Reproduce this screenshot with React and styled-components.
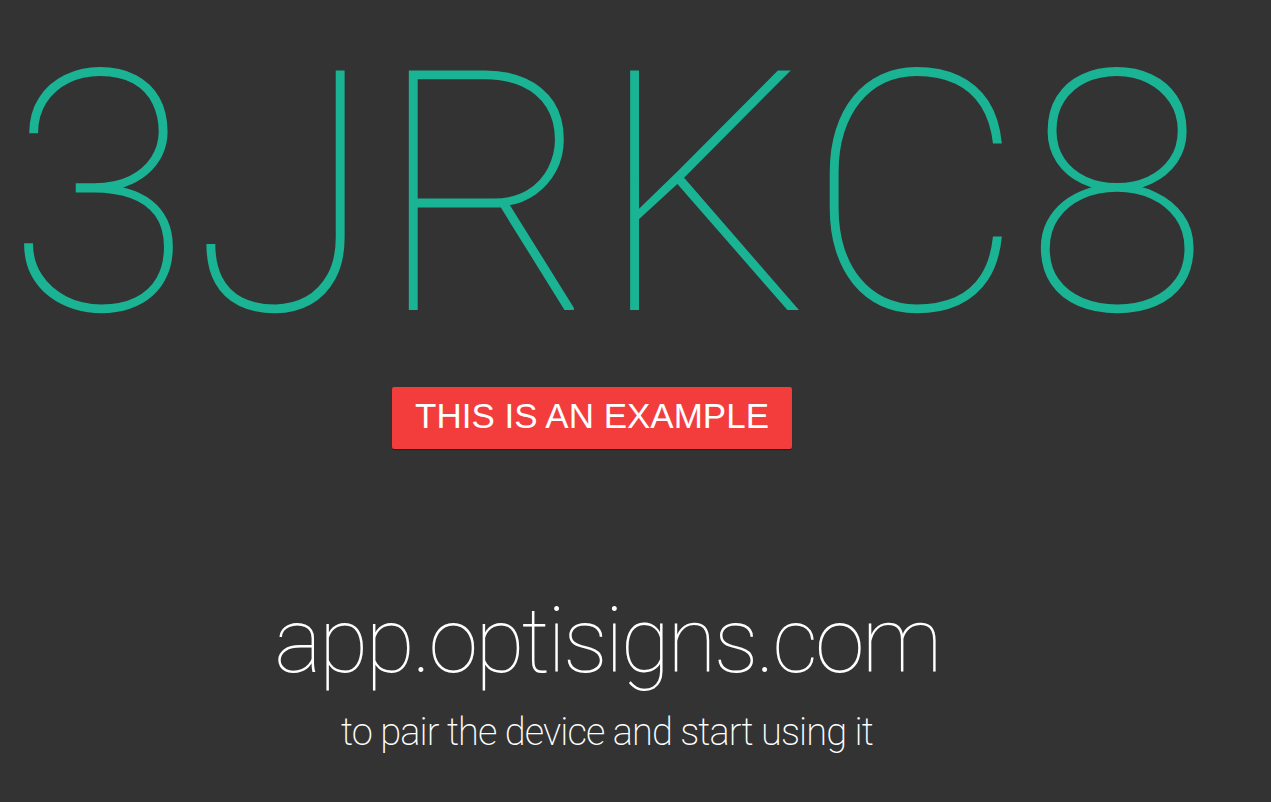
import React from "react";
import styled, { createGlobalStyle } from "styled-components";

const Global = createGlobalStyle`
  html, body { margin: 0; padding: 0; background: #333333; }
  body { font-family: Roboto, "Noto Sans", sans-serif; overflow: hidden; }
`;

const Page = styled.div`
  width: 1214px;
  height: 802px;
  display: flex;
  flex-direction: column;
  align-items: center;
  text-align: center;
`;

const Code = styled.div`
  align-self: stretch;
  padding-left: 2px;
  font-family: Roboto, sans-serif;
  font-weight: 100;
  font-size: 337px;
  line-height: 380px;
  color: #1ab394;
  margin-top: 5px;
  white-space: nowrap;
`;

const Badge = styled.div`
  box-sizing: border-box;
  margin-top: 2px;
  margin-right: 30px;
  background: #f33c3c;
  color: #fff;
  font-family: "Liberation Sans", Arial, sans-serif;
  font-size: 35px;
  line-height: 58px;
  height: 62px;
  padding: 0 23px 4px;
  border-radius: 2px;
  box-shadow: 0 1px 1px rgba(0, 0, 0, 0.45);
`;

const Url = styled.div`
  margin-top: 148px;
  font-family: Roboto, sans-serif;
  font-weight: 100;
  font-size: 90px;
  line-height: 90px;
  letter-spacing: -2.8px;
  color: #ffffff;
  white-space: nowrap;
`;

const Hint = styled.div`
  margin-top: 23px;
  font-family: Roboto, sans-serif;
  font-weight: 200;
  font-size: 38px;
  line-height: 44px;
  letter-spacing: -0.9px;
  color: #ffffff;
  white-space: nowrap;
`;

export default function App() {
  return (
    <>
      <Global />
      <Page>
        <Code>3JRKC8</Code>
        <Badge>THIS IS AN EXAMPLE</Badge>
        <Url>app.optisigns.com</Url>
        <Hint>to pair the device and start using it</Hint>
      </Page>
    </>
  );
}
